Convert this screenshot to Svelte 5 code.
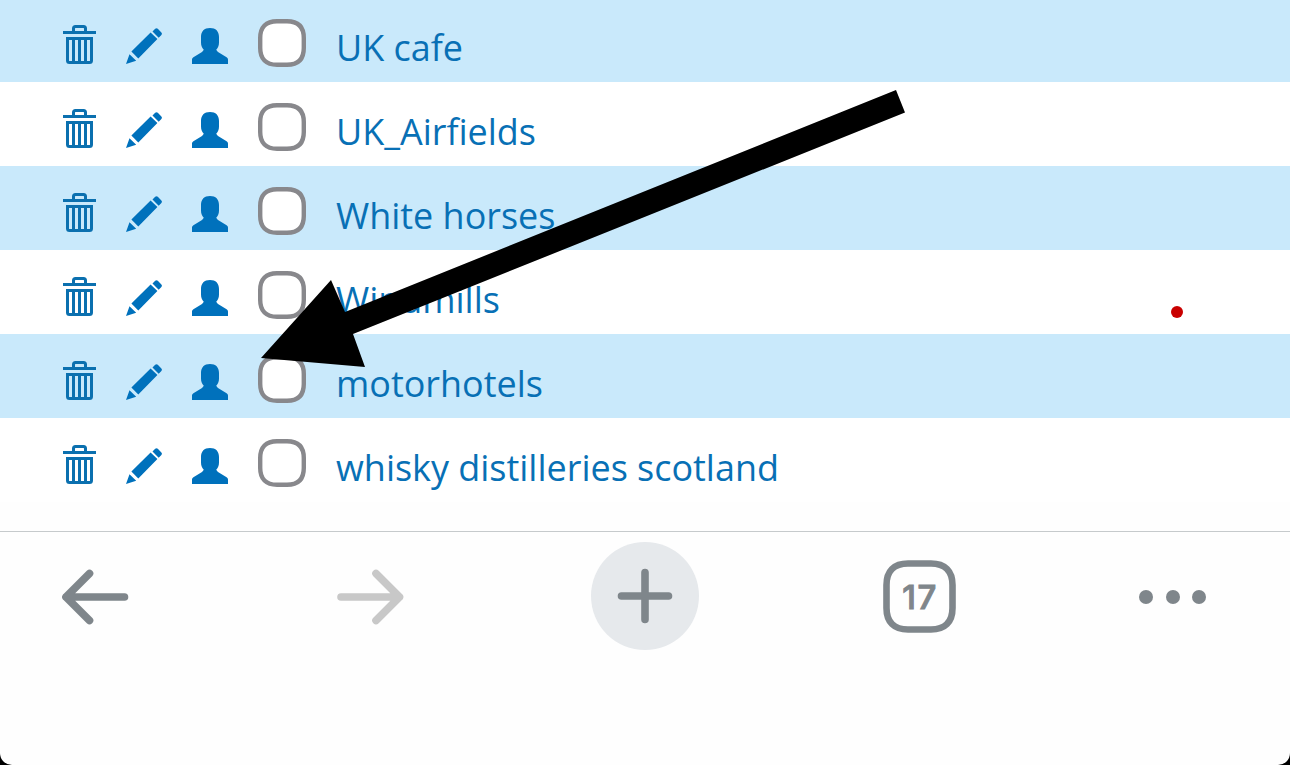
<script>
  let rows = [
    "UK cafe",
    "UK_Airfields",
    "White horses",
    "Windmills",
    "motorhotels",
    "whisky distilleries scotland",
  ];
  let tabCount = 17;
</script>

<div class="screen">
  <ul class="list">
    {#each rows as name}
      <li class="row">
        <svg class="trash" width="33" height="39" viewBox="0 0 33 39" aria-hidden="true">
          <path d="M0 7.5H33M10.5 7V3.5Q10.5 1.5 12.5 1.5H20.5Q22.5 1.5 22.5 3.5V7" />
          <path d="M4.5 13.5H28.5V35.5Q28.5 37.5 26.5 37.5H6.5Q4.5 37.5 4.5 35.5Z" />
          <path d="M10.5 13V37M16.5 13V37M22.5 13V37" />
        </svg>
        <svg class="pencil" width="36" height="36" viewBox="0 0 36 36" aria-hidden="true">
          <path d="M0 36L3.5 26.3L10.2 32.8ZM5.4 23.5L24.6 4.4L31.4 11L12.3 30.4ZM26.5 3.5L29.2.8Q30.5-.4 31.8.8L35.4 4.4Q36.6 5.6 35.4 6.9L32.7 9.7Z" />
        </svg>
        <svg class="person" width="36" height="36" viewBox="0 0 36 36" aria-hidden="true">
          <path d="M18 0C23.8 0 27 3.3 27 9V14.5C27 17.5 26 20 24.3 21.5Q24.6 23 26 23.9L34.6 29.2Q36 30.1 36 31.5V36H0V31.5Q0 30.1 1.4 29.2L10 23.9Q11.4 23 11.7 21.5C10 20 9 17.5 9 14.5V9C9 3.3 12.2 0 18 0Z" />
        </svg>
        <svg class="checkbox" width="48" height="48" viewBox="0 0 48 48" aria-hidden="true">
          <path d="M19 2.2H29C40 2.2 45.8 8 45.8 19V29C45.8 40 40 45.8 29 45.8H19C8 45.8 2.2 40 2.2 29V19C2.2 8 8 2.2 19 2.2Z" />
        </svg>
        <span class="name">{name}</span>
      </li>
    {/each}
  </ul>

  <nav class="toolbar">
    <svg class="back" width="67" height="56" viewBox="0 0 67 56" aria-label="Back">
      <path d="M27.5 4.5L4 28L27.5 51.5M4 28H62.5" />
    </svg>
    <svg class="forward" width="67" height="56" viewBox="0 0 67 56" aria-label="Forward">
      <path d="M39 4.5L62.5 28L39 51.5M62.5 28H4" />
    </svg>
    <div class="add">
      <svg width="56" height="56" viewBox="0 0 56 56" aria-label="New tab">
        <path d="M28 4.5V51.5M4.5 28H51.5" />
      </svg>
    </div>
    <div class="tabs">
      <svg class="tabs-box" width="73" height="73" viewBox="0 0 73 73" aria-hidden="true">
        <path d="M25 3.5H48C62 3.5 69.5 11 69.5 25V48C69.5 62 62 69.5 48 69.5H25C11 69.5 3.5 62 3.5 48V25C3.5 11 11 3.5 25 3.5Z" />
      </svg>
      <span class="tabs-count">{tabCount}</span>
    </div>
    <div class="more"><i></i><i></i><i></i></div>
  </nav>

  <span class="dot"></span>
  <svg class="pointer" width="1290" height="765" viewBox="0 0 1290 765" aria-hidden="true">
    <path d="M896 90L905 112.5L353 334L365 367L261 358L331 280L345 312Z" />
  </svg>
</div>

<style>
  :global(body) {
    background: #000;
  }

  .screen {
    position: relative;
    display: flex;
    flex-direction: column;
    width: 1290px;
    height: 765px;
    overflow: hidden;
    background: #fefefe;
    border-radius: 0 0 12px 12px;
    font-family: "Open Sans", "Noto Sans", sans-serif;
  }

  .list {
    margin: -2px 0 29px;
    padding: 0;
    list-style: none;
  }

  .row {
    display: flex;
    align-items: flex-start;
    box-sizing: border-box;
    height: 84px;
    padding: 21px 0 0 63px;
    background: #fff;
  }

  .row:nth-child(odd) {
    background: #c9e9fb;
  }

  .row svg {
    flex: none;
    overflow: visible;
    fill: #0071bc;
  }

  .row .trash {
    margin: 6px 30px 0 0;
    fill: none;
    stroke: #0b70af;
    stroke-width: 3;
  }

  .pencil,
  .person {
    margin: 9px 30px 0 0;
  }

  .row .checkbox {
    margin-right: 30px;
    fill: #fff;
    stroke: #88888c;
    stroke-width: 4.4;
  }

  .name {
    margin-top: 4px;
    color: #0870b5;
    font-size: 35.95px;
    line-height: 50px;
    white-space: nowrap;
  }

  .toolbar {
    display: flex;
    align-items: center;
    box-sizing: border-box;
    height: 119px;
    padding: 0 0 0 62px;
    margin-bottom: auto;
    border-top: 1px solid #c6cacc;
  }

  .toolbar svg {
    fill: none;
    stroke: #7f868b;
    stroke-width: 7.6;
    stroke-linecap: round;
    stroke-linejoin: round;
  }

  .back {
    margin: 11px 208px 0 0;
  }

  .toolbar .forward {
    margin: 11px 187px 0 0;
    stroke: #c8c8c8;
  }

  .add {
    display: flex;
    align-items: center;
    justify-content: center;
    width: 108px;
    height: 108px;
    margin: 10px 184px 0 0;
    border-radius: 50%;
    background: #e6e9ec;
  }

  .tabs {
    display: grid;
    place-items: center;
    width: 73px;
    height: 73px;
    margin: 11px 183px 0 0;
    color: #7f868b;
    font-family: Inter, sans-serif;
    font-size: 33px;
    font-weight: 500;
    line-height: 1;
  }

  .tabs-box,
  .tabs-count {
    grid-area: 1 / 1;
  }

  .toolbar .tabs-box {
    stroke-width: 6.6;
  }

  .tabs-count {
    margin: 2px 0 0 1px;
    letter-spacing: 1.5px;
    -webkit-text-stroke: 1px #7f868b;
  }

  .more {
    display: flex;
    justify-content: space-between;
    width: 67px;
    margin-top: 11px;
  }

  .more i {
    width: 14px;
    height: 14px;
    border-radius: 50%;
    background: #7f868b;
  }

  /* annotations drawn over the page */
  .dot {
    position: absolute;
    left: 1171px;
    top: 306px;
    width: 12px;
    height: 12px;
    border-radius: 50%;
    background: #c90000;
  }

  .pointer {
    position: absolute;
    left: 0;
    top: 0;
  }
</style>
